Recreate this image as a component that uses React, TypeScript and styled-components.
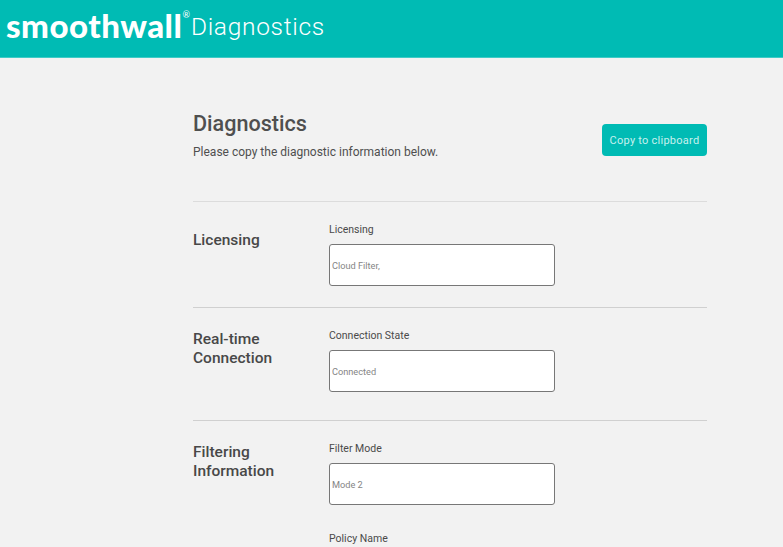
import React from 'react';
import styled, { createGlobalStyle } from 'styled-components';

const TEAL = '#00bbb4';

const GlobalStyle = createGlobalStyle`
    html, body {
        background: #f2f2f2;
        height: 547px;
        margin: 0;
        overflow: hidden;
    }

    * {
        box-sizing: border-box;
    }
`;

const Header = styled.header`
    align-items: center;
    background: ${TEAL};
    border-bottom: 1px solid #3fcbc6;
    display: flex;
    height: 58px;
    padding: 0 0 6px 6px;
`;

const Brand = styled.span`
    color: #fff;
    font-family: 'Lato', sans-serif;
    font-size: 33px;
    font-weight: 900;
    letter-spacing: 0.5px;
    line-height: 1;
`;

const Registered = styled.sup`
    align-self: flex-start;
    color: #fff;
    font-family: 'Lato', sans-serif;
    font-size: 9px;
    line-height: 1;
    margin: 10px 0 0 0;
`;

const Product = styled.span`
    color: #fff;
    font-family: 'Roboto', sans-serif;
    font-size: 24.5px;
    font-weight: 300;
    letter-spacing: 0.7px;
    line-height: 1;
    margin: 3px 0 0 1px;
`;

const Page = styled.main`
    color: #444;
    font-family: 'Roboto', sans-serif;
    margin-left: 193px;
    width: 514px;
`;

const Intro = styled.div`
    align-items: flex-start;
    border-bottom: 1px solid #dcdcdc;
    display: flex;
    height: 144px;
    justify-content: space-between;
    padding-top: 53px;
`;

const Title = styled.h1`
    color: #4f4f4f;
    font-size: 21.6px;
    font-weight: 500;
    line-height: 26px;
    margin: 0 0 7px;
`;

const Lead = styled.p`
    color: #4f4f4f;
    font-size: 12px;
    line-height: 16px;
    margin: 0;
`;

const CopyButton = styled.button`
    background: ${TEAL};
    border: 0;
    border-radius: 4px;
    color: #c8f0ee;
    font-family: 'Roboto', sans-serif;
    font-size: 11px;
    height: 32px;
    letter-spacing: 0.25px;
    margin-top: 13px;
    padding: 0;
    width: 105px;
`;

const Section = styled.section<{ $height: number }>`
    border-bottom: 1px solid #d0d0d0;
    display: grid;
    grid-template-columns: 136px 226px;
    height: ${props => props.$height}px;
    padding-top: 21px;

    &:last-child {
        border-bottom: 0;
    }
`;

const SectionTitle = styled.h2<{ $offset: number }>`
    color: #484848;
    font-size: 15.5px;
    font-weight: 500;
    line-height: 19px;
    margin: ${props => props.$offset}px 0 0;
`;

const Fields = styled.div`
    display: flex;
    flex-direction: column;
    gap: 27px;
`;

const Field = styled.label`
    display: block;
`;

const FieldLabel = styled.span`
    color: #4a4a4a;
    display: block;
    font-size: 10.5px;
    line-height: 14px;
    margin-bottom: 7px;
`;

const ValueInput = styled.input`
    background: #fff;
    border: 1px solid #777;
    border-radius: 3px;
    color: #858585;
    display: block;
    font-family: 'Roboto', sans-serif;
    font-size: 9.2px;
    height: 42px;
    outline: 0;
    padding: 0 2px;
    width: 226px;
`;

const SECTIONS = [
    {
        title: ['Licensing'],
        height: 106,
        offset: 8,
        fields: [{ label: 'Licensing', value: 'Cloud Filter,' }],
    },
    {
        title: ['Real-time', 'Connection'],
        height: 113,
        offset: 1,
        fields: [{ label: 'Connection State', value: 'Connected' }],
    },
    {
        title: ['Filtering', 'Information'],
        height: 200,
        offset: 1,
        fields: [
            { label: 'Filter Mode', value: 'Mode 2' },
            { label: 'Policy Name', value: '' },
        ],
    },
];

export default function App() {
    return (
        <>
            <GlobalStyle />
            <Header>
                <Brand>smoothwall</Brand>
                <Registered>®</Registered>
                <Product>Diagnostics</Product>
            </Header>
            <Page>
                <Intro>
                    <div>
                        <Title>Diagnostics</Title>
                        <Lead>Please copy the diagnostic information below.</Lead>
                    </div>
                    <CopyButton>Copy to clipboard</CopyButton>
                </Intro>
                {SECTIONS.map(section => (
                    <Section key={section.title[0]} $height={section.height}>
                        <SectionTitle $offset={section.offset}>
                            {section.title.map(line => (
                                <div key={line}>{line}</div>
                            ))}
                        </SectionTitle>
                        <Fields>
                            {section.fields.map(field => (
                                <Field key={field.label}>
                                    <FieldLabel>{field.label}</FieldLabel>
                                    <ValueInput readOnly value={field.value} />
                                </Field>
                            ))}
                        </Fields>
                    </Section>
                ))}
            </Page>
        </>
    );
}
